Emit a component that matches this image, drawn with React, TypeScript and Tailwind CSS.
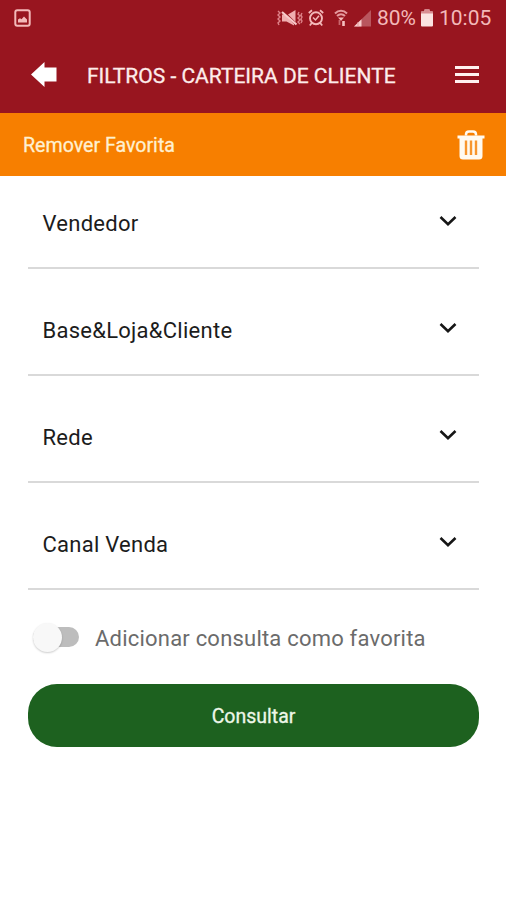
import { useState } from "react";

interface FilterRowProps {
  label: string;
}

const filters = ["Vendedor", "Base&Loja&Cliente", "Rede", "Canal Venda"];

function PictureIcon() {
  return (
    <svg width="17" height="18" viewBox="0 0 17 18" fill="none">
      <rect x="1.3" y="1.3" width="14.4" height="15.4" rx="2" stroke="#f3b9b9" strokeWidth="2" />
      <path d="M4 13.5v-3l2-1.2 1.5 1L10 7.5l3 3v3z" fill="#f3b9b9" />
    </svg>
  );
}

function MuteVibrateIcon() {
  return (
    <svg width="26" height="18" viewBox="0 0 26 18" fill="none">
      <path d="M5 5.500h3l9 9.500v1.500L9.500 12.500H5z" fill="#f0aeb0" />
      <path d="M11 5.500 18.500 1v12z" fill="#f0aeb0" />
      <path d="M5 3 19.500 15.500" stroke="#f8caca" strokeWidth="2.200" />
      <path d="M1 2l2 2-2 2 2 2-2 2 2 2-2 2 1 2M22 3l-1 2 2 2-2 2 2 2-2 2 2 2M25 4l-1 2 1 2-1 2 1 2-1 2" stroke="#dd8288" strokeWidth="1.4" />
    </svg>
  );
}

function AlarmIcon() {
  return (
    <svg width="16" height="18" viewBox="0 0 16 18" fill="none" stroke="#f3b9b9">
      <circle cx="8" cy="9.300" r="6" strokeWidth="1.9" />
      <path d="M.8 4 4 1.200M15.200 4 12 1.200M3.800 14l-2 2.500M12.200 14l2 2.500" strokeWidth="1.8" />
      <path d="M5 8.500 7.500 11 11 6.800" strokeWidth="1.5" />
    </svg>
  );
}

function WifiIcon() {
  return (
    <svg width="14" height="18" viewBox="0 0 14 18" fill="none">
      <path d="M1 4.500C4.500.8 9.500.8 13 4.500M3 7c2.300-2.200 5.700-2.200 8 0" stroke="#e59a9e" strokeWidth="2" />
      <path d="M4 8.500h6L7 12z" fill="#f3b9b9" />
      <path d="M5.500 11v5" stroke="#c8666d" strokeWidth="1.8" />
      <path d="M9.500 12v5" stroke="#f5c0c0" strokeWidth="2.600" />
    </svg>
  );
}

function SignalIcon() {
  return (
    <svg width="17" height="18" viewBox="0 0 17 18">
      <path d="M0 17.500 17 1v16.500z" fill="#b9565e" />
      <path d="M0 17.500 7.500 10.200v7.300z" fill="#f8cccb" />
      <path d="M4 13v4.500" stroke="#e39a9e" />
    </svg>
  );
}

function BatteryIcon() {
  return (
    <svg width="12" height="18" viewBox="0 0 12 18">
      <path d="M3.500.5h5v2H11q1 0 1 1v13q0 1-1 1H1q-1 0-1-1v-13q0-1 1-1h2.500z" fill="#fbe3e1" />
      <path d="M3.500.5h5v2H12v2H0v-2h3.500z" fill="#d98c91" />
    </svg>
  );
}

function StatusBar() {
  return (
    <div className="flex h-9 items-center justify-between pr-[13px] pl-[14px] text-[21px] text-[#f3b9b9]">
      <PictureIcon />
      <div className="flex items-center">
        <MuteVibrateIcon />
        <div className="ml-[5px]"><AlarmIcon /></div>
        <div className="ml-[10px]"><WifiIcon /></div>
        <div className="ml-[6px]"><SignalIcon /></div>
        <span className="ml-[6px] w-[40px] leading-none whitespace-nowrap">80%</span>
        <div className="ml-[4px]"><BatteryIcon /></div>
        <span className="ml-[6px] w-[54px] leading-none whitespace-nowrap">10:05</span>
      </div>
    </div>
  );
}

function Header() {
  return (
    <header className="h-[113px] bg-[#98151f]">
      <StatusBar />
      <div className="flex h-[77px] items-center pr-[27px] pl-[31px]">
        <button aria-label="Voltar">
          <svg width="26" height="26" viewBox="0 0 26 26" fill="#fff">
            <path d="M0 12.500 13.500 0v5.500H25.500v14h-12V25z" />
          </svg>
        </button>
        <h1 className="mt-1 ml-[30px] flex-1 text-[21px] whitespace-nowrap text-[#fdecea] [-webkit-text-stroke:0.3px_#fdecea]">
          FILTROS - CARTEIRA DE CLIENTE
        </h1>
        <button aria-label="Menu" className="flex flex-col gap-[4px]">
          <span className="h-[3px] w-6 bg-[#fff1f0]" />
          <span className="h-[3px] w-6 bg-[#fff1f0]" />
          <span className="h-[3px] w-6 bg-[#fff1f0]" />
        </button>
      </div>
    </header>
  );
}

function TrashIcon() {
  return (
    <svg width="28" height="30" viewBox="0 0 28 30" fill="none">
      <path d="M9 5.500V4.500q0-3 3-3h4q3 0 3 3v1" stroke="#fffaf0" strokeWidth="2.500" />
      <path d="M.500 5.500h27v3h-27z" fill="#fffaf0" />
      <path d="M2.500 7h23v19q0 3.500-3.500 3.500h-16Q2.500 29.500 2.500 26z" fill="#fffaf0" />
      <path d="M9 10.500V25M14 10.500V25M19 10.500V25" stroke="#f7962e" strokeWidth="2.400" />
    </svg>
  );
}

function FilterRow({ label }: FilterRowProps) {
  return (
    <div className="flex h-[107px] items-end justify-between border-b-2 border-[#d9d9d9] pr-[22px] pb-[31px] pl-[14.5px]">
      <span className="text-[22px] leading-[25px] tracking-[0.26px] text-[#1c1c1c]">{label}</span>
      <svg className="mb-[9px]" width="18" height="12" viewBox="0 0 18 12" fill="none">
        <path d="M1.500 2 9 9.200 16.500 2" stroke="#161616" strokeWidth="2.600" />
      </svg>
    </div>
  );
}

export default function App() {
  const [favorite, setFavorite] = useState(false);

  return (
    <div className="h-[900px] w-[506px] overflow-hidden bg-white font-['Roboto',sans-serif]">
      <Header />
      <div className="flex h-[63px] items-center justify-between bg-[#f77f00] pr-[21px] pl-[23px]">
        <span className="mt-[3px] text-[19.6px] text-[#fff0d0] [-webkit-text-stroke:0.3px_#fff0d0]">Remover Favorita</span>
        <button aria-label="Remover">
          <TrashIcon />
        </button>
      </div>

      <main className="pr-[27px] pl-7">
        <div className="-mt-[14px]">
          {filters.map((label) => (
            <FilterRow key={label} label={label} />
          ))}
        </div>

        <div className="mt-[29px] flex h-9 items-center pl-[5px]">
          <button
            role="switch"
            aria-checked={favorite}
            aria-label="Adicionar consulta como favorita"
            onClick={() => setFavorite(!favorite)}
            className={`flex h-5 w-[46px] items-center rounded-full ${favorite ? "justify-end bg-[#1d611f]" : "bg-[#bdbdbd]"}`}
          >
            <span className="size-[29px] shrink-0 rounded-full bg-[#f8f8f8] shadow-[0_1px_2px_rgba(0,0,0,0.2)]" />
          </button>
          <span className="mt-0.5 ml-[16px] text-[22px] tracking-[0.21px] whitespace-nowrap text-[#6b6b6b]">
            Adicionar consulta como favorita
          </span>
        </div>

        <button className="mt-[29px] flex h-[63px] w-full items-center justify-center rounded-[29px] bg-[#1d611f] pt-[3px] text-[19.5px] text-[#edf7e8] [-webkit-text-stroke:0.3px_#edf7e8]">
          Consultar
        </button>
      </main>
    </div>
  );
}
